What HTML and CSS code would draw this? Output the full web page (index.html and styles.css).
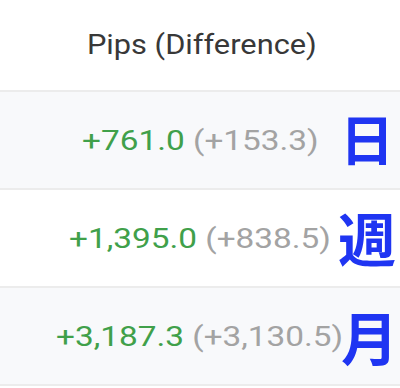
FILE: index.html
```html
<!DOCTYPE html>
<html lang="ja">
<head>
<meta charset="utf-8">
<link rel="stylesheet" href="styles.css">
</head>
<body>
<div class="table">
  <div class="head"><span class="head-text">Pips (Difference)</span></div>
  <div class="row alt">
    <span class="val"><span class="pos">+761.0</span> <span class="diff">(+153.3)</span></span>
    <span class="tag tag-day">日</span>
  </div>
  <div class="row">
    <span class="val"><span class="pos">+1,395.0</span> <span class="diff">(+838.5)</span></span>
    <span class="tag tag-week">週</span>
  </div>
  <div class="row alt">
    <span class="val"><span class="pos">+3,187.3</span> <span class="diff">(+3,130.5)</span></span>
    <span class="tag tag-month">月</span>
  </div>
</div>
</body>
</html>
```
FILE: styles.css
```css
html, body {
  margin: 0;
  padding: 0;
  background: #ffffff;
}
body {
  width: 400px;
  height: 388px;
  overflow: hidden;
  font-family: Roboto, "Noto Sans", sans-serif;
}
.table {
  display: flex;
  flex-direction: column;
}
.head {
  height: 90px;
  display: flex;
  align-items: center;
  justify-content: center;
  border-bottom: 2px solid #ececec;
  padding-left: 4px;
}
.head-text {
  display: inline-block;
  font-size: 27px;
  color: #383838;
  transform: scaleX(1.14);
}
.row {
  position: relative;
  height: 96px;
  display: flex;
  align-items: center;
  justify-content: center;
  border-bottom: 2px solid #ececec;
  background: #ffffff;
}
.row.alt {
  background: #f8f9fb;
}
.val {
  display: inline-block;
  font-size: 28px;
  white-space: nowrap;
  transform: scaleX(1.19);
}
.pos {
  color: #40a04a;
}
.diff {
  color: #a3a3a3;
}
.tag {
  position: absolute;
  font-family: "Noto Sans CJK JP", "Noto Sans CJK SC", sans-serif;
  font-weight: 700;
  color: #1f35f2;
  line-height: 1;
}
.tag-day {
  font-size: 54px;
  left: 340px;
  top: 19px;
}
.tag-week {
  font-size: 58px;
  left: 338px;
  top: 18px;
}
.tag-month {
  font-size: 57px;
  left: 341px;
  top: 19px;
}
```
